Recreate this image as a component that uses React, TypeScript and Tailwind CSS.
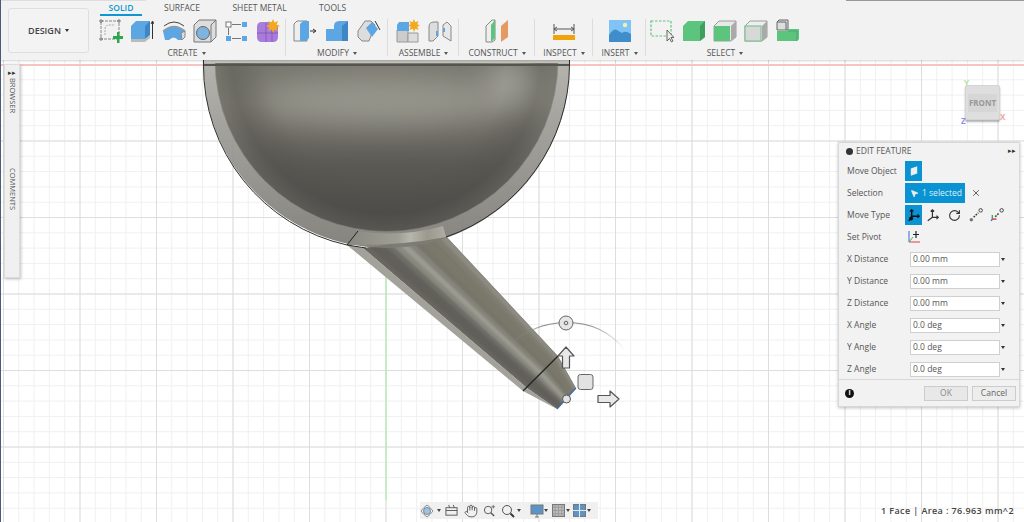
import { Hand, MousePointer2, RotateCw, X } from "lucide-react";
import type { ReactNode } from "react";

function Caret({ className = "ml-1 border-t-[#555]" }: { className?: string }) {
  return <span className={`inline-block h-0 w-0 shrink-0 border-x-[2.5px] border-t-[3px] border-x-transparent ${className}`} />;
}

function Ico({ children, w = 24 }: { children: ReactNode; w?: number }) {
  return (
    <svg viewBox="0 0 24 24" width={w} height={w} className="shrink-0">
      {children}
    </svg>
  );
}

const createIcons = [
  <Ico key="sketch">
    <rect x="2" y="2" width="18" height="18" fill="none" stroke="#888" strokeDasharray="3 1" />
    <path d="M1 1h2v2H1zM19 1h2v2h-2zM1 19h2v2H1z" fill="#fff" stroke="#555" strokeWidth="0.800" />
    <path d="M6 16V10q0-4 4-4h6" fill="none" stroke="#aaa" strokeDasharray="2 1" />
    <path d="M14 17h4v-4h2.500v4H24v3h-3.500v4H18v-4h-4z" fill="#2da84f" />
  </Ico>,
  <Ico key="extrude">
    <path d="M1 7l5-5h14v14l-5 4H1z" fill="#5ca6e3" />
    <path d="M15 20V7l5-5v14z" fill="#3f86c6" />
    <path d="M1 20h14l5-4v3l-5 4H1z" fill="#bbb" />
    <path d="M22.500 20V3m-1.500 2l1.500-3 1.500 3" stroke="#333" fill="none" />
  </Ico>,
  <Ico key="revolve">
    <path d="M1 12q11-9 22 0l-3 9H16q-4-5-9 0H3z" fill="#5ca6e3" />
    <path d="M1 12q11-9 22 0" fill="none" stroke="#999" strokeWidth="1.500" />
    <path d="M2 7q10-8 20 0" fill="none" stroke="#444" />
    <path d="M19 14l4-2v6l-3 3z" fill="#ddd" stroke="#888" />
  </Ico>,
  <Ico key="hole">
    <path d="M1 6l5-5h17v17l-5 5H1z" fill="#ddd" stroke="#777" />
    <circle cx="10" cy="14" r="6.500" fill="#7eb4e0" stroke="#666" />
    <path d="M18 23V6l5-5" fill="none" stroke="#777" />
  </Ico>,
  <Ico key="pattern">
    <rect x="1" y="3" width="5" height="5" fill="#fff" stroke="#777" />
    <rect x="17" y="3" width="5" height="5" fill="#5ca6e3" />
    <rect x="1" y="17" width="5" height="5" fill="#5ca6e3" />
    <rect x="17" y="17" width="5" height="5" fill="#5ca6e3" />
    <path d="M7 5.500h9M3.500 9v7M7 19.500h9" stroke="#777" />
  </Ico>,
  <Ico key="form">
    <path d="M1 8q0-5 5-5h10l6 5v10q0 5-5 5H6q-5 0-5-5z" fill="#a87bdc" />
    <path d="M1 14h21M10 4v19M16 4v19" stroke="#7a52ad" strokeWidth="0.700" />
    <path d="M17 0l1.500 3.500L22 2l-1.500 3.500L24 7l-3.500 1.500L22 12l-3.500-1.500L17 14l-1.500-3.500L12 12l1.500-3.500L10 7l3.500-1.500L12 2l3.500 1.500z" fill="#f3a91f" />
  </Ico>,
];

const modifyIcons = [
  <Ico key="press">
    <path d="M1 5l3-3h10v20H1z" fill="#eee" stroke="#888" />
    <path d="M7 5l3-3h6v17l-3 3H7z" fill="#5ca6e3" />
    <path d="M17 12h5m-2-2l3 2-3 2" stroke="#333" fill="none" />
  </Ico>,
  <Ico key="fillet">
    <path d="M1 22V10h8V7q0-5 6-5h8v20z" fill="#5ca6e3" />
    <path d="M17 22V7l6-5v20z" fill="#3f86c6" />
  </Ico>,
  <Ico key="chamfer">
    <path d="M1 12l7-10h6l4 4-6 16H5l-4-4z" fill="#ddd" stroke="#888" />
    <path d="M9 9l6-6 6 7-6 8z" fill="#5ca6e3" />
    <path d="M18 2l5 9" stroke="#333" />
  </Ico>,
];

const assembleIcons = [
  <Ico key="component">
    <path d="M1 11h11v12H1z" fill="#ccc" stroke="#999" />
    <path d="M12 14h10v9H12z" fill="#ddd" stroke="#999" />
    <path d="M1 6l2-3h10v9H1z" fill="#5ca6e3" />
    <path d="M18 0l1.300 3.200L22.500 2l-1.200 3.200L24 6.500l-2.700 1.300L22.500 11l-3.200-1.200L18 13l-1.300-3.200-3.200 1.200 1.200-3.200L12 6.500l2.700-1.300L13.500 2l3.200 1.200z" fill="#f3a91f" />
  </Ico>,
  <Ico key="joint">
    <path d="M1 8q0-5 5-5h4v14l-5 5H1z" fill="#ddd" stroke="#888" />
    <path d="M15 6l4-3 4 4v15l-8-5z" fill="#e8e8e8" stroke="#888" />
    <path d="M8 12h2v5H8zM15 9h2v4h-2z" fill="#5ca6e3" />
  </Ico>,
];

const selectIcons = [
  <Ico key="window">
    <rect x="1" y="2" width="20" height="15" fill="none" stroke="#5cc47d" strokeWidth="1.200" strokeDasharray="2.500 1.500" />
    <path d="M17 11v11l2.500-2.500 2 3.500 1.500-1-2-3.500h3z" fill="#eee" stroke="#444" strokeWidth="0.800" />
  </Ico>,
  <Ico key="solid">
    <path d="M1 7l5-5h17v16l-5 4H1z" fill="#5cc47d" />
    <path d="M18 22V7l5-5v16z" fill="#3f9e60" />
  </Ico>,
  <Ico key="face">
    <path d="M1 7l5-5h17v16l-5 4H1z" fill="#e8e8e8" stroke="#888" strokeWidth="0.800" />
    <path d="M18 22V7l5-5v16z" fill="#aaa" />
    <rect x="1" y="7" width="16" height="15" fill="#5cc47d" />
  </Ico>,
  <Ico key="edge">
    <path d="M1 7l5-5h17v16l-5 4H1z" fill="#eee" stroke="#888" strokeWidth="0.800" />
    <path d="M18 22V7l5-5v16z" fill="#aaa" />
    <rect x="1" y="7" width="16" height="15" fill="#d8d8d8" stroke="#7fc596" strokeWidth="1.200" />
  </Ico>,
  <Ico key="group">
    <path d="M1 3l2-2h9v10H1z" fill="#ddd" stroke="#666" />
    <path d="M1 3h9v8" fill="none" stroke="#666" />
    <rect x="1" y="12" width="10" height="10" fill="#5cc47d" />
    <path d="M11 12l2-2h10v10l-2 2H11z" fill="#5cc47d" />
    <path d="M12 12h9v10" fill="none" stroke="#3f9e60" strokeWidth="0.700" />
  </Ico>,
];

const groups = [
  { label: "CREATE", width: "w-[193px]", gap: "gap-[7.400px]", shift: "-translate-x-[3px]", icons: createIcons },
  { label: "MODIFY", width: "w-[102px]", gap: "gap-[8px]", shift: "", icons: modifyIcons },
  { label: "ASSEMBLE", width: "w-[71px]", gap: "gap-[8px]", shift: "", icons: assembleIcons },
  {
    label: "CONSTRUCT",
    width: "w-[76px]",
    gap: "gap-0",
    shift: "",
    icons: [
      <Ico key="plane">
        <path d="M1 7l6-6h3v20l-3 2H1z" fill="#eee" stroke="#888" />
        <path d="M6 6l4-5v18l-4 4z" fill="#5cc47d" />
        <path d="M16 7l7-6v17l-7 5z" fill="#e59a62" />
      </Ico>,
    ],
  },
  {
    label: "INSPECT",
    width: "w-[58px]",
    gap: "gap-0",
    shift: "",
    icons: [
      <Ico key="measure">
        <path d="M2 5v10M22 5v10M2 10h20M2 10l3-2M2 10l3 2M22 10l-3-2M22 10l-3 2" stroke="#555" fill="none" />
        <rect x="1" y="16" width="22" height="5" fill="#f0a30a" />
      </Ico>,
    ],
  },
  {
    label: "INSERT",
    width: "w-[53px]",
    gap: "gap-0",
    shift: "",
    icons: [
      <Ico key="image">
        <rect x="1" y="1" width="22" height="22" fill="#7fc4f5" />
        <circle cx="17" cy="6" r="2.200" fill="#f6edb0" />
        <path d="M1 23v-7q5-7 8-5t5 3q3-3 9 1v8z" fill="#3f8ecb" />
      </Ico>,
    ],
  },
  { label: "SELECT", width: "w-[158px]", gap: "gap-[7.400px]", shift: "", icons: selectIcons },
];

function Toolbar() {
  return (
    <header className="relative z-10 flex h-[60px] shrink-0 bg-[#f2f2f2] shadow-[0_1px_2px_rgba(0,0,0,0.18)]">
      <span className="absolute left-0 top-0 h-px w-[145px] bg-[#dddddd]" />
      <span className="absolute left-[845px] top-0 h-px w-[179px] bg-[#999999]" />
      <div className="w-[92px] shrink-0 pl-[7px] pt-[8px]">
        <div className="flex h-[45px] w-[81px] items-center justify-center rounded-[3px] border border-[#dedede] bg-[#f3f3f3] text-[9px] font-semibold text-[#444]">
          DESIGN
          <Caret className="ml-1 border-t-[#333]" />
        </div>
      </div>
      <div className="flex flex-col">
        <nav className="ml-[7px] flex h-[19px] gap-[32.500px] text-[8.500px]">
          <span className="-mr-[10.500px] h-[16px] w-[42px] border-b-2 border-[#0f96d4] pt-[3px] text-center font-semibold leading-[10px] text-[#0f96d4]">SOLID</span>
          {["SURFACE", "SHEET METAL", "TOOLS"].map((tab) => (
            <span key={tab} className="pt-[3px] leading-[10px] text-[#555]">
              {tab}
            </span>
          ))}
        </nav>
        <div className="flex">
          {groups.map((g, i) => (
            <div key={g.label} className={`relative flex shrink-0 flex-col items-center ${g.width}`}>
              <div className={`flex h-[27px] items-start ${g.gap}`}>{g.icons}</div>
              <div className={`mt-[1px] flex items-center text-[8.500px] leading-[12px] text-[#555] ${g.shift}`}>
                {g.label}
                <Caret />
              </div>
              {i < groups.length - 1 && <span className="absolute right-0 top-0 h-[37px] border-r border-[#dcdcdc]" />}
            </div>
          ))}
        </div>
      </div>
    </header>
  );
}

// grid spacing of the model view
const minorStep = 15.3;
const minors = Array.from({ length: 70 }, (_, i) => 3.5 + i * minorStep);
const minorsY = Array.from({ length: 31 }, (_, i) => 64.5 + i * minorStep);

// stripes along the spout, t runs across it from lower left to upper right
const spoutStripes = ["#676560", "#605e59", "#62605b", "#6e6d66", "#8a8980", "#9c9b91", "#85847a", "#77756a", "#7a786b", "#7a786b", "#7f7d71", "#8d8c82"];
const mix = (a: number[], b: number[], t: number) => `${a[0] + (b[0] - a[0]) * t},${a[1] + (b[1] - a[1]) * t}`;
const spoutQuad = (i: number) => {
  const n = spoutStripes.length;
  const t0 = i / n;
  const t1 = (i + 1.2) / n;
  const top = [[363, 248], [446, 236]];
  const mid = [[527, 388], [558, 356]];
  const tip = [[557, 409], [576, 388]];
  return [mix(top[0], top[1], t0), mix(mid[0], mid[1], t0), mix(tip[0], tip[1], t0), mix(tip[0], tip[1], t1), mix(mid[0], mid[1], t1), mix(top[0], top[1], t1)].join(" ");
};

function Model() {
  return (
    <svg viewBox="0 60 1024 462" width={1024} height={462} className="block">
      <defs>
        <linearGradient id="bowl" x1="0" y1="60" x2="0" y2="232" gradientUnits="userSpaceOnUse">
          <stop offset="0" stopColor="#74736b" />
          <stop offset="0.25" stopColor="#78776e" />
          <stop offset="0.6" stopColor="#5c5a55" />
          <stop offset="1" stopColor="#4a4844" />
        </linearGradient>
        <radialGradient id="bowlRim" cx="386.500" cy="59" r="171.500" gradientUnits="userSpaceOnUse">
          <stop offset="0.7" stopColor="#4e4c48" stopOpacity="0" />
          <stop offset="0.9" stopColor="#4e4c48" stopOpacity="0.3" />
          <stop offset="1" stopColor="#777670" stopOpacity="0.3" />
        </radialGradient>
        <linearGradient id="shell" x1="0" y1="60" x2="0" y2="245" gradientUnits="userSpaceOnUse">
          <stop offset="0" stopColor="#aeada7" />
          <stop offset="1" stopColor="#7b7a74" />
        </linearGradient>
        <linearGradient id="band" x1="350" y1="0" x2="447" y2="0" gradientUnits="userSpaceOnUse">
          <stop offset="0" stopColor="#8b8a82" />
          <stop offset="0.5" stopColor="#a09f95" />
          <stop offset="0.62" stopColor="#b7b6ab" />
          <stop offset="0.8" stopColor="#9b998e" />
          <stop offset="1" stopColor="#b0afa5" />
        </linearGradient>
        <linearGradient id="arc" x1="505" y1="0" x2="625" y2="0" gradientUnits="userSpaceOnUse">
          <stop offset="0" stopColor="#8a8a8a" stopOpacity="0" />
          <stop offset="0.35" stopColor="#8a8a8a" />
          <stop offset="0.7" stopColor="#8a8a8a" />
          <stop offset="1" stopColor="#8a8a8a" stopOpacity="0" />
        </linearGradient>
        <filter id="soft" filterUnits="userSpaceOnUse" x="0" y="0" width="1024" height="522">
          <feGaussianBlur stdDeviation="16" />
        </filter>
        <filter id="softStripe" x="-10%" y="-10%" width="120%" height="120%">
          <feGaussianBlur stdDeviation="1" />
        </filter>
        <clipPath id="bowlClip">
          <path d="M215 60A171.500 171.500 0 0 0 558 60Z" />
        </clipPath>
        <clipPath id="spoutClip">
          <path d="M363 248L527 388L557 409L576 388L558 356L446 236Z" />
        </clipPath>
      </defs>

      {minors.map((x) => (
        <line key={x} x1={x} x2={x} y1={60} y2={522} stroke="#f0f0f0" />
      ))}
      {minorsY.map((y) => (
        <line key={y} x1={0} x2={1024} y1={y} y2={y} stroke="#f0f0f0" />
      ))}
      {minors
        .filter((_, i) => i % 5 === 0)
        .map((x) => (
          <line key={x} x1={x} x2={x} y1={60} y2={522} stroke="#dddddd" />
        ))}
      {minorsY
        .filter((_, i) => i % 5 === 0)
        .map((y) => (
          <line key={y} x1={0} x2={1024} y1={y} y2={y} stroke="#dddddd" />
        ))}
      <line x1={0} x2={1024} y1={65} y2={65} stroke="#f7c4c4" strokeWidth="2" />
      <line x1={386} x2={386} y1={240} y2={500} stroke="#a0eca4" />

      {/* spout */}
      <path d="M347 245L523 391L557 409L527 388L363 248Z" fill="#a3a29a" />
      <g clipPath="url(#spoutClip)">
        <path d="M363 248L527 388L557 409L576 388L558 356L446 236Z" fill="#6f6e66" />
        <g filter="url(#softStripe)">
          {spoutStripes.map((c, i) => (
            <polygon key={i} points={spoutQuad(i)} fill={c} />
          ))}
        </g>
      </g>
      <path d="M523 391L558 356" stroke="#222" strokeWidth="1.200" />
      <path d="M557 409L576 388" stroke="#3c68b0" strokeWidth="1.200" />

      {/* outer shell */}
      <path d="M203.500 60V65A183 183 0 0 0 569.500 65V60Z" fill="url(#shell)" fillOpacity="0.92" />
      {/* inner bowl */}
      <path d="M215 60A171.500 171.500 0 0 0 558 60Z" fill="url(#bowl)" />
      <g clipPath="url(#bowlClip)">
        <ellipse cx="380" cy="100" rx="125" ry="24" fill="#98978e" filter="url(#soft)" />
        <ellipse cx="515" cy="85" rx="28" ry="22" fill="#a8a7a0" filter="url(#soft)" />
      </g>
      <path d="M215 60A171.500 171.500 0 0 0 558 60Z" fill="url(#bowlRim)" stroke="#8b8a84" strokeWidth="0.600" />
      <path d="M358 231Q400 238 443 226L446 237Q400 246 347 245Z" fill="url(#band)" />
      <path d="M203.500 60V65A183 183 0 0 0 347 245" fill="none" stroke="#2d2d2d" />
      <path d="M446 237A183 183 0 0 0 569.500 65V60" fill="none" stroke="#2d2d2d" />
      <path d="M347 245L358 231M347 245L366 248" stroke="#222" fill="none" />
      <rect x="204" y="60" width="365" height="3" fill="#c4c3be" />
      <rect x="204" y="64" width="365" height="2" fill="#55544f" />

      {/* move gizmo */}
      <path d="M505 350Q530 323 566 322.500T625 350" fill="none" stroke="url(#arc)" strokeWidth="1.200" />
      <circle cx="566" cy="323" r="7" fill="#e6e6e6" stroke="#666" />
      <circle cx="566" cy="323" r="1.800" fill="#ddd" stroke="#666" />
      <path d="M566 347L574 356H569.500V368H562.500V356H558Z" fill="#e8e8e8" stroke="#555" strokeWidth="1.200" strokeLinejoin="round" />
      <rect x="578" y="374.500" width="15" height="15" rx="2.500" fill="#e2e2e2" stroke="#666" />
      <circle cx="566.500" cy="399" r="4" fill="#e3e3e3" stroke="#555" />
      <path d="M619 399L610 391V395.500H598V402.500H610V407Z" fill="#e8e8e8" stroke="#555" strokeWidth="1.200" strokeLinejoin="round" />
    </svg>
  );
}

function SidePanel() {
  return (
    <aside className="absolute left-[4px] top-[4px] flex h-[214px] w-[16px] flex-col items-center border border-[#dcdcdc] bg-[#f0f0f0] text-[7.500px] text-[#555] shadow-[1px_1px_3px_rgba(0,0,0,0.25)]">
      <span className="mt-[3px] text-[7px] leading-[9px] text-[#333]">▸▸</span>
      <span className="mt-[1px] [writing-mode:vertical-rl]">BROWSER</span>
      <span className="mt-[55px] [writing-mode:vertical-rl]">COMMENTS</span>
    </aside>
  );
}

function ViewCube() {
  return (
    <div className="absolute left-[961px] top-[17px] h-[48px] w-[50px]">
      <span className="absolute left-[3px] top-0 text-[8px] font-bold text-[#a8e8a8]">Y</span>
      <div className="absolute left-[4px] top-[8px] flex h-[35px] w-[35px] items-center justify-center rounded-[2px] border border-[#d4d4d4] bg-[#dedede] shadow-[0_2px_2px_rgba(0,0,0,0.3)]">
        <span className="bg-[#d6d6d6] px-[1px] py-[3px] text-[8px] font-bold text-[#999]">FRONT</span>
      </div>
      <span className="absolute left-[39px] top-[34px] text-[8px] font-bold text-[#f5a0a0]">X</span>
      <span className="absolute left-0 top-[38px] text-[8px] font-bold text-[#8f8ff0]">Z</span>
    </div>
  );
}

const moveIconsColor = "#333";
const moveTypes = [
  <Ico key="free" w={14}>
    <path d="M8 3v15M8 14h13M8 16l-5 6" stroke="#111" strokeWidth="2.500" fill="none" />
    <path d="M5 6l3-3 3 3M18 11l3 3-3 3" stroke="#111" strokeWidth="2" fill="none" />
    <circle cx="7" cy="18" r="3.500" fill="#111" />
  </Ico>,
  <Ico key="translate" w={14}>
    <path d="M11 3v13M11 16H21M11 16L3 22M8 6l3-3 3 3M18 13l3 3-3 3" stroke={moveIconsColor} strokeWidth="2" fill="none" />
  </Ico>,
  <RotateCw key="rotate" size={13} color={moveIconsColor} strokeWidth={2} />,
  <Ico key="point" w={14}>
    <circle cx="4" cy="20" r="3" fill="#777" />
    <circle cx="20" cy="4" r="3" fill="none" stroke="#333" strokeWidth="1.500" />
    <path d="M8 16l8-8" stroke="#333" strokeWidth="2.500" strokeDasharray="3 2" />
  </Ico>,
  <Ico key="pointTo" w={14}>
    <circle cx="20" cy="4" r="3" fill="none" stroke="#333" strokeWidth="1.500" />
    <path d="M9 15l7-7" stroke="#333" strokeWidth="2.500" strokeDasharray="3 2" />
    <path d="M4 12v7" stroke="#3fae55" strokeWidth="2.500" />
    <path d="M4 19h7" stroke="#e03c3c" strokeWidth="2.500" />
    <path d="M4 19l-2 3" stroke="#3c68d0" strokeWidth="2.500" />
  </Ico>,
];

function Row({ label, children }: { label: string; children: ReactNode }) {
  return (
    <div className="flex h-[22px] items-center pl-[8px]">
      <span className="w-[58px] shrink-0 text-[#555]">{label}</span>
      {children}
    </div>
  );
}

const valueRows = [
  { label: "X Distance", value: "0.00 mm" },
  { label: "Y Distance", value: "0.00 mm" },
  { label: "Z Distance", value: "0.00 mm" },
  { label: "X Angle", value: "0.0 deg" },
  { label: "Y Angle", value: "0.0 deg" },
  { label: "Z Angle", value: "0.0 deg" },
];

function EditFeature() {
  return (
    <section className="absolute left-[838px] top-[82px] h-[265px] w-[182px] border border-[#d8d8d8] bg-[#f2f2f2] text-[8.500px] shadow-[0_1px_3px_rgba(0,0,0,0.25)]">
      <div className="flex h-[17px] items-center pb-[1px] pl-[7px] pr-[3px] text-[#555]">
        <span className="mr-[3px] h-[7px] w-[7px] rounded-full bg-[#333]" />
        <span>EDIT FEATURE</span>
        <span className="ml-auto text-[7px] text-[#333]">▸▸</span>
      </div>
      <Row label="Move Object">
        <div className="flex h-[20px] w-[17px] items-center justify-center bg-[#0a93d2]">
          <svg viewBox="0 0 10 12" width={8} height={10}>
            <path d="M1 3l8-3v9l-8 3z" fill="#eee" />
          </svg>
        </div>
      </Row>
      <Row label="Selection">
        <div className="flex h-[20px] w-[60px] items-center gap-[3px] whitespace-nowrap bg-[#0a93d2] pl-[5px] text-[#dff1fa]">
          <MousePointer2 size={9} fill="#eee" color="#eee" />
          1 selected
        </div>
        <X size={10} strokeWidth={2.2} color="#555" className="ml-[6px]" />
      </Row>
      <Row label="Move Type">
        <div className="flex items-center">
          <div className="flex h-[20px] w-[17px] items-center justify-center bg-[#0a93d2]">{moveTypes[0]}</div>
          {moveTypes.slice(1).map((icon, i) => (
            <div key={i} className="flex w-[21.500px] items-center justify-center">
              {icon}
            </div>
          ))}
        </div>
      </Row>
      <Row label="Set Pivot">
        <div className="pl-[2px]">
          <svg viewBox="0 0 14 14" width={14} height={14}>
            <path d="M2 1v11" stroke="#3c68d0" />
            <path d="M2 12h11" stroke="#e03c3c" />
            <path d="M2 12l4-5" stroke="#3fae55" />
            <path d="M9 1v7M6 4.500h6" stroke="#222" strokeWidth="1.200" />
          </svg>
        </div>
      </Row>
      {valueRows.map((r) => (
        <Row key={r.label} label={r.label}>
          <div className="ml-[5px] flex h-[15px] w-[90px] items-center border border-[#cfcfcf] bg-white pl-[2px] text-[#555]">{r.value}</div>
          <Caret className="ml-[1px] border-t-[#333]" />
        </Row>
      ))}
      <div className="mt-[-1px] flex items-center justify-between border-t border-[#d8d8d8] pl-[6px] pr-[3px] pt-[6px]">
        <span className="flex h-[9px] w-[9px] items-center justify-center rounded-full bg-[#111] text-[7px] font-bold text-white">i</span>
        <div className="flex gap-[4px] text-[#666]">
          <span className="flex h-[15px] w-[44px] items-center justify-center border border-[#cccccc] bg-[#e8e8e8] text-[#888]">OK</span>
          <span className="flex h-[15px] w-[44px] items-center justify-center border border-[#cccccc] bg-[#ededed]">Cancel</span>
        </div>
      </div>
    </section>
  );
}

function NavBar() {
  return (
    <div className="absolute left-[420px] top-[442px] flex h-[17px] w-[178px] items-center bg-[#f0f0f0]">
      <svg viewBox="0 0 14 14" width={14} height={14}>
        <circle cx="7" cy="7" r="3.500" fill="#9cc4e6" stroke="#666" strokeWidth="0.700" />
        <path d="M1 7q3-4 6-6 3 2 6 6-3 4-6 6-3-2-6-6z" fill="none" stroke="#777" strokeWidth="0.800" />
      </svg>
      <Caret className="ml-[2.500px] border-t-[#444]" />
      <svg viewBox="0 0 14 14" width={13} height={13} className="ml-[4px]">
        <rect x="1" y="4" width="12" height="8" fill="none" stroke="#555" />
        <path d="M1 7h12M4 1l1 3M9 1l1 3" stroke="#555" fill="none" />
      </svg>
      <Hand size={14} color="#555" strokeWidth={1.5} className="ml-[6px]" />
      <svg viewBox="0 0 14 14" width={13} height={13} className="ml-[5px]">
        <circle cx="5.500" cy="6.500" r="4" fill="none" stroke="#555" />
        <path d="M8.500 9.500L12 13" stroke="#555" strokeWidth="1.500" />
        <path d="M11 1v4M9 3h4" stroke="#555" strokeWidth="0.800" />
      </svg>
      <svg viewBox="0 0 14 14" width={14} height={14} className="ml-[5px]">
        <circle cx="6" cy="6" r="4.500" fill="none" stroke="#555" />
        <path d="M9.500 9.500L13 13" stroke="#333" strokeWidth="1.800" />
      </svg>
      <Caret className="ml-[2.500px] border-t-[#444]" />
      <svg viewBox="0 0 14 14" width={14} height={14} className="ml-[8.500px]">
        <rect x="1" y="1" width="12" height="9" fill="#5d94c8" stroke="#777" />
        <path d="M5 13h4M7 10v3" stroke="#777" />
      </svg>
      <Caret className="ml-[0.500px] border-t-[#444]" />
      <svg viewBox="0 0 12 12" width={13} height={13} className="ml-[4px]">
        <rect x="0.500" y="0.500" width="11" height="11" fill="#bbb" stroke="#777" />
        <path d="M3 0v12M6 0v12M9 0v12M0 3h12M0 6h12M0 9h12" stroke="#888" strokeWidth="0.500" />
      </svg>
      <Caret className="ml-[1px] border-t-[#444]" />
      <svg viewBox="0 0 12 12" width={13} height={13} className="ml-[3px]">
        <rect x="0.500" y="0.500" width="11" height="11" fill="#5d94c8" stroke="#777" />
        <path d="M6 0v12M0 6h12" stroke="#e8e8e8" />
      </svg>
      <Caret className="ml-[1px] border-t-[#444]" />
    </div>
  );
}

export default function App() {
  return (
    <div
      className="flex h-[522px] w-[1024px] flex-col overflow-hidden border-l border-[#4a5a78] bg-white"
      style={{ fontFamily: '"Open Sans", "Liberation Sans", sans-serif' }}
    >
      <Toolbar />
      <main className="relative -ml-px flex-1">
        <Model />
        <SidePanel />
        <ViewCube />
        <EditFeature />
        <NavBar />
        <span className="absolute left-[881px] top-[444px] text-[9px] font-semibold tracking-[0.4px] text-[#444]">1 Face | Area : 76.963 mm^2</span>
      </main>
    </div>
  );
}
